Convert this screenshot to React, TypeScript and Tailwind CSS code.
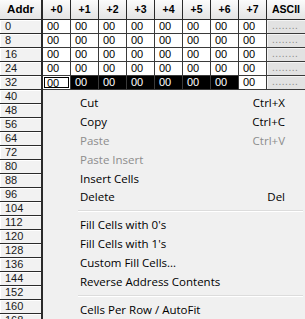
import React from "react";

const cols = ["+0", "+1", "+2", "+3", "+4", "+5", "+6", "+7"];
const addrs = Array.from({ length: 22 }, (_, i) => i * 8);

type Item = { label: string; shortcut?: string; disabled?: boolean } | "sep";

const items: Item[] = [
  { label: "Cut", shortcut: "Ctrl+X" },
  { label: "Copy", shortcut: "Ctrl+C" },
  { label: "Paste", shortcut: "Ctrl+V", disabled: true },
  { label: "Paste Insert", disabled: true },
  { label: "Insert Cells" },
  { label: "Delete", shortcut: "Del" },
  "sep",
  { label: "Fill Cells with 0's" },
  { label: "Fill Cells with 1's" },
  { label: "Custom Fill Cells..." },
  { label: "Reverse Address Contents" },
  "sep",
  { label: "Cells Per Row / AutoFit" },
];

function Row({ addr }: { addr: number }) {
  const selected = addr === 32;
  const covered = addr >= 40;
  return (
    <>
      <div className="h-[14px] border-r-2 border-b border-[#2a2a2a] bg-[#f2f2f2] pl-[5px] text-[11px] leading-[13px] text-[#1a1a1a] shadow-[inset_1px_1px_0_#ffffff]">
        {addr}
      </div>
      {cols.map((c, i) => {
        if (selected && i === 0) {
          return (
            <div key={c} className="h-[14px] border-r border-b border-[#3a3a3a] bg-white p-[1px]">
              <div className="h-full border border-black pl-[2px] text-[11px] leading-[10px] text-black">00</div>
            </div>
          );
        }
        const dark = selected && i > 0 && i < 7;
        return (
          <div
            key={c}
            className={
              "h-[14px] border-r border-b border-[#3a3a3a] pl-[4px] text-[11px] leading-[13px] " +
              (dark ? "bg-black text-white" : "bg-white text-black")
            }
          >
            {covered ? "" : "00"}
          </div>
        );
      })}
      <div className="h-[14px] border-b border-[#3a3a3a] bg-[#e2e2e2] pl-[5px] text-[10px] leading-[11px] tracking-[0.5px] text-[#8a8a8a] shadow-[inset_1px_1px_0_#f4f4f4]">
        {covered ? "" : "........"}
      </div>
    </>
  );
}

export default function App() {
  return (
    <div
      className="relative h-[319px] w-[305px] overflow-hidden bg-white"
      style={{ fontFamily: '"Liberation Sans", Arial, sans-serif' }}
    >
      <div className="grid grid-cols-[43px_repeat(8,28px)_1fr]">
        <div className="flex h-[20px] items-center justify-center border-r-2 border-b border-[#2a2a2a] bg-[linear-gradient(to_bottom,#fbfbfb,#e4e4e4)] text-[11.5px] font-bold text-black">
          Addr
        </div>
        {cols.map((c) => (
          <div
            key={c}
            className="flex h-[20px] items-center justify-center border-r border-b border-[#2a2a2a] bg-[linear-gradient(to_bottom,#fbfbfb,#e4e4e4)] text-[10.5px] font-bold text-black"
          >
            {c}
          </div>
        ))}
        <div className="flex h-[20px] items-center justify-center border-b border-[#2a2a2a] bg-[linear-gradient(to_bottom,#fbfbfb,#e4e4e4)] text-[10.5px] font-bold text-black">
          ASCII
        </div>
        {addrs.map((a) => (
          <Row key={a} addr={a} />
        ))}
      </div>

      <div
        className="absolute top-[90px] right-0 bottom-0 left-[43px] flex flex-col bg-[#f0f0f0] pt-[3px] text-[11.5px]"
        style={{ fontFamily: '"Open Sans", "Noto Sans", sans-serif' }}
      >
        {items.map((it, idx) =>
          it === "sep" ? (
            <div key={idx} className="flex h-[9px] flex-col justify-center pl-[35px] pr-[2px]">
              <div className="h-px bg-[#dcdcdc]" />
              <div className="h-px bg-white" />
            </div>
          ) : (
            <div
              key={idx}
              className={
                "flex h-[19px] items-center justify-between pl-[37px] pr-[20px] " +
                (it.disabled ? "text-[#8d8d8d]" : "text-black")
              }
            >
              <span>{it.label}</span>
              {it.shortcut && <span>{it.shortcut}</span>}
            </div>
          )
        )}
      </div>
    </div>
  );
}
